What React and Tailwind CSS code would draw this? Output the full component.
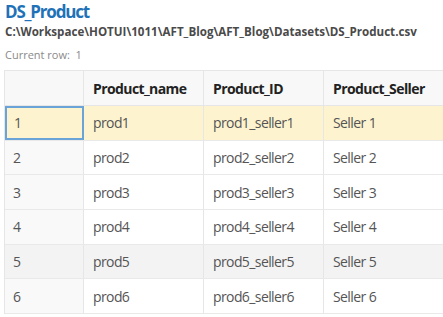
import React from 'react';

const rows = [1, 2, 3, 4, 5, 6].map((n) => ({
  n,
  name: `prod${n}`,
  id: `prod${n}_seller${n}`,
  seller: `Seller ${n}`,
}));

const App = () => {
  return (
    <div className="w-[443px] h-[317px] overflow-hidden bg-white font-['Open_Sans',sans-serif]">
      {/* Header */}
      <div className="pl-[5px] pt-[1px]">
        <h1 className="text-[17px] leading-[22px] font-bold text-[#1f72b8] tracking-[-1.2px]">DS_Product</h1>
        <p className="mt-[2px] text-[11.6px] leading-[14px] font-bold text-[#4a4a4a] whitespace-nowrap">
          C:\Workspace\HOTUI\1011\AFT_Blog\AFT_Blog\Datasets\DS_Product.csv
        </p>
        <p className="mt-[9px] text-[11px] leading-[14px] text-[#8a8a8a]">Current row:&nbsp; 1</p>
      </div>

      {/* Table */}
      <div className="mt-[8px] ml-[4px] w-[500px] border-l border-t border-[#e6e6e6] tracking-[-0.6px]">
        <div className="grid grid-cols-[79px_120px_120px_1fr] h-[35px] bg-[#f8f8f8] border-b border-[#e6e6e6] text-[14px] font-bold text-[#222]">
          <div className="border-r border-[#e6e6e6]" />
          <div className="border-r border-[#e6e6e6] flex items-center pl-[9px]">Product_name</div>
          <div className="border-r border-[#e6e6e6] flex items-center pl-[9px]">Product_ID</div>
          <div className="flex items-center pl-[9px]">Product_Seller</div>
        </div>
        {rows.map((r) => {
          const selected = r.n === 1;
          const hover = r.n === 5;
          const rowBg = selected ? 'bg-[#fdf4cf]' : hover ? 'bg-[#f3f3f3]' : 'bg-white';
          return (
            <div
              key={r.n}
              className={`grid grid-cols-[79px_120px_120px_1fr] h-[34.7px] border-b border-[#e9e9e9] text-[14px] text-[#555] ${rowBg}`}
            >
              <div
                className={
                  selected
                    ? 'border-2 border-[#6aa3d8] flex items-center pl-[7px]'
                    : `border-r border-[#e6e6e6] flex items-center pl-[8px] ${hover ? 'bg-[#f3f3f3]' : 'bg-[#f9f9f9]'}`
                }
              >
                {r.n}
              </div>
              <div className="border-r border-[#e6e6e6] flex items-center pl-[9px]">{r.name}</div>
              <div className="border-r border-[#e6e6e6] flex items-center pl-[9px]">{r.id}</div>
              <div className="flex items-center pl-[9px]">{r.seller}</div>
            </div>
          );
        })}
      </div>
    </div>
  );
};

export default App;
